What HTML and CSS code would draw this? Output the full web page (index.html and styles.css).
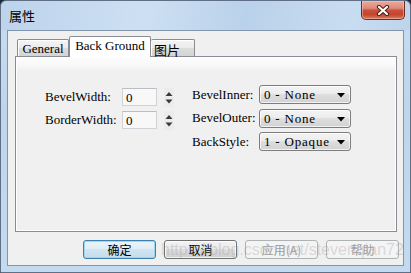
FILE: index.html
```html
<!DOCTYPE html>
<html>
<head>
<meta charset="utf-8">
<link rel="stylesheet" href="styles.css">
</head>
<body>
<div class="window">
  <div class="titlebar">
    <span class="title">属性</span>
    <div class="close">
      <svg width="14" height="11" viewBox="0 0 14 11"><path d="M3 2 L11 9 M11 2 L3 9" stroke="#4b1f18" stroke-width="4.2" stroke-linecap="round"/><path d="M3 2 L11 9 M11 2 L3 9" stroke="#fff" stroke-width="2.2" stroke-linecap="round"/></svg>
    </div>
  </div>
  <div class="client">
    <div class="tabs">
      <div class="tab tab-general">General</div>
      <div class="tab tab-active">Back Ground</div>
      <div class="tab tab-pic cjk">图片</div>
    </div>
    <div class="panel">
      <div class="left-group">
        <span class="lbl">BevelWidth:</span>
        <div class="edit">0</div>
        <div class="spin">
          <svg width="10" height="19" viewBox="0 0 10 19"><path d="M5 4 L8.5 8 L1.5 8 Z" fill="#3a3a3a"/><path d="M1.5 11.5 L8.5 11.5 L5 15.5 Z" fill="#3a3a3a"/></svg>
        </div>
        <span class="lbl">BorderWidth:</span>
        <div class="edit">0</div>
        <div class="spin">
          <svg width="10" height="19" viewBox="0 0 10 19"><path d="M5 4 L8.5 8 L1.5 8 Z" fill="#3a3a3a"/><path d="M1.5 11.5 L8.5 11.5 L5 15.5 Z" fill="#3a3a3a"/></svg>
        </div>
      </div>
      <div class="right-group">
        <span class="lbl">BevelInner:</span>
        <div class="combo"><span>0 - None</span><svg width="8" height="5" viewBox="0 0 8 5"><path d="M0 0 L8 0 L4 4.5 Z" fill="#000"/></svg></div>
        <span class="lbl">BevelOuter:</span>
        <div class="combo"><span>0 - None</span><svg width="8" height="5" viewBox="0 0 8 5"><path d="M0 0 L8 0 L4 4.5 Z" fill="#000"/></svg></div>
        <span class="lbl">BackStyle:</span>
        <div class="combo"><span>1 - Opaque</span><svg width="8" height="5" viewBox="0 0 8 5"><path d="M0 0 L8 0 L4 4.5 Z" fill="#000"/></svg></div>
      </div>
    </div>
    <div class="buttons">
      <div class="btn btn-default">确定</div>
      <div class="btn">取消</div>
      <div class="btn btn-disabled">应用(A)</div>
      <div class="btn btn-disabled">帮助</div>
    </div>
  </div>
  <div class="watermark">https://blog.csdn.net/stevenqian72</div>
</div>
</body>
</html>
```
FILE: styles.css
```css
html, body {
  margin: 0;
  padding: 0;
  width: 411px;
  height: 273px;
  overflow: hidden;
  background: #1d2a3a;
}

.window {
  position: relative;
  box-sizing: border-box;
  width: 411px;
  height: 273px;
  border: 1px solid #5f7086;
  border-radius: 6px 6px 0 0;
  background: linear-gradient(to bottom, #b7cfe8 0%, #c6dbf0 12%, #bed5ec 40%, #c4daef 100%);
  font-family: "Liberation Serif", serif;
}

.titlebar {
  height: 29px;
  display: flex;
  justify-content: space-between;
  align-items: flex-start;
  background: linear-gradient(100deg, #bcd3eb 0%, #cde0f3 35%, #b9d1ea 60%, #c9ddf1 85%, #bdd4eb 100%);
  border-radius: 6px 6px 0 0;
}

.title {
  font-family: "Noto Sans CJK SC", sans-serif;
  font-size: 13px;
  line-height: 14px;
  margin: 8px 0 0 8px;
  color: #000;
}

.close {
  width: 44px;
  height: 19px;
  margin-right: 5px;
  box-sizing: border-box;
  border: 1px solid #6e2b22;
  border-top: none;
  border-radius: 0 0 5px 5px;
  background: linear-gradient(to bottom, #e9aa9c 0%, #dc8a78 40%, #c8503c 52%, #c4452f 75%, #d77d62 100%);
  display: flex;
  align-items: center;
  justify-content: center;
  box-shadow: inset 0 0 0 1px rgba(255, 210, 200, 0.45);
}

.client {
  box-sizing: border-box;
  width: 397px;
  height: 236px;
  margin-left: 6px;
  border: 1px solid #8395ad;
  background: #f0f0f0;
  display: flex;
  flex-direction: column;
}

.tabs {
  display: flex;
  align-items: flex-end;
  height: 20px;
  margin-top: 6px;
  padding-left: 9px;
  position: relative;
  z-index: 2;
  margin-bottom: -1px;
}

.tab {
  box-sizing: border-box;
  border: 1px solid #898c95;
  border-bottom: none;
  border-radius: 2px 2px 0 0;
  font-size: 13px;
  color: #000;
  display: flex;
  justify-content: center;
  align-items: center;
  white-space: nowrap;
}

.tab-general {
  width: 52px;
  height: 17px;
  background: linear-gradient(to bottom, #f4f4f4 0%, #ebebeb 50%, #dcdcdc 52%, #d4d4d4 100%);
  box-shadow: inset 1px 1px 0 #fff;
  padding-top: 2px;
  margin-bottom: 1px;
}

.tab-active {
  width: 82px;
  height: 21px;
  background: #fff;
  padding-bottom: 3px;
}

.tab-pic {
  width: 44px;
  height: 17px;
  background: linear-gradient(to bottom, #f4f4f4 0%, #ebebeb 50%, #dcdcdc 52%, #d4d4d4 100%);
  box-shadow: inset 1px 1px 0 #fff;
  margin-bottom: 1px;
  border-left: none;
  justify-content: flex-start;
  padding-left: 3px;
  padding-top: 2px;
}

.cjk {
  font-family: "Noto Sans CJK SC", sans-serif;
  font-size: 13px;
}

.panel {
  box-sizing: border-box;
  width: 382px;
  height: 176px;
  margin-left: 7px;
  border: 1px solid #898c95;
  background: linear-gradient(to bottom, #fdfdfd 0px, #f8f8f8 8px, #f0f0f0 14px);
  box-shadow: inset 0 0 0 1px #fff;
  display: flex;
  align-items: flex-start;
  padding: 28px 0 0 29px;
  gap: 18px;
  position: relative;
  z-index: 1;
}

.lbl {
  font-size: 13px;
  color: #000;
  white-space: nowrap;
}

.left-group {
  margin-top: 3px;
  display: grid;
  grid-template-columns: 70px 35px 10px;
  grid-auto-rows: 18px;
  row-gap: 5px;
  column-gap: 7px;
  align-items: center;
}

.edit {
  box-sizing: border-box;
  height: 18px;
  border: 1px solid #cfd3d8;
  border-top-color: #b9bec4;
  background: #f8f8f8;
  font-size: 13px;
  padding: 2px 0 0 3px;
  line-height: 14px;
  color: #000;
}

.spin {
  height: 19px;
  background: #ececec;
  display: flex;
}

.right-group {
  display: grid;
  grid-template-columns: 67px 92px;
  grid-auto-rows: 19px;
  row-gap: 4.5px;
  align-items: center;
}

.combo {
  box-sizing: border-box;
  height: 19px;
  border: 1px solid #7d7d7d;
  border-radius: 3px;
  background: linear-gradient(to bottom, #f4f4f4 0%, #ececec 45%, #dedede 50%, #d2d2d2 100%);
  box-shadow: inset 0 0 0 1px rgba(255, 255, 255, 0.7);
  display: flex;
  align-items: center;
  justify-content: space-between;
  padding: 1px 5px 0 4px;
  font-size: 13px;
  letter-spacing: 0.8px;
  color: #000;
  white-space: nowrap;
}

.combo svg {
  margin-top: 1px;
}

.buttons {
  display: flex;
  justify-content: flex-end;
  gap: 8px;
  padding-right: 4px;
  margin-top: 8px;
}

.btn {
  box-sizing: border-box;
  width: 73px;
  height: 19px;
  border: 1px solid #707070;
  border-radius: 3px;
  background: linear-gradient(to bottom, #f2f2f2 0%, #ebebeb 45%, #dddddd 50%, #cfcfcf 100%);
  box-shadow: inset 0 0 0 1px rgba(255, 255, 255, 0.75);
  font-family: "Noto Sans CJK SC", sans-serif;
  font-size: 12px;
  line-height: 16px;
  color: #000;
  display: flex;
  justify-content: center;
  align-items: center;
}

.btn-default {
  border-color: #3c7fb1;
  box-shadow: inset 0 0 0 1px #9fd7f2;
  background: linear-gradient(to bottom, #eaf4fa 0%, #dfeef7 45%, #d0e4f0 50%, #c6dcea 100%);
}

.btn-disabled {
  border-color: #adb2b5;
  background: #f4f4f4;
  box-shadow: none;
  color: #a0a0a0;
}

.watermark {
  position: absolute;
  left: 160px;
  top: 240px;
  font-family: "Liberation Sans", sans-serif;
  font-size: 16px;
  color: rgba(160, 160, 160, 0.35);
  white-space: nowrap;
  pointer-events: none;
}
```
